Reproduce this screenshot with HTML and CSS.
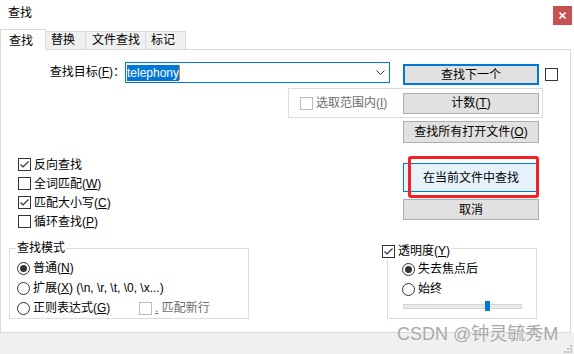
FILE: index.html
```html
<!DOCTYPE html>
<html lang="zh-CN">
<head>
  <meta charset="UTF-8">
  <title>查找</title>
  <link rel="stylesheet" href="styles.css">
</head>
<body>
  <div class="dialog">
    <div class="titlebar">
      <span class="title">查找</span>
      <span class="close">
        <svg width="7" height="7" viewBox="0 0 7 7"><path d="M0.5 0.5l6 6M6.5 0.5l-6 6"/></svg>
      </span>
    </div>

    <div class="tabs">
      <div class="tab active">查找</div>
      <div class="tab tab-short">替换</div>
      <div class="tab tab-long">文件查找</div>
      <div class="tab tab-short">标记</div>
    </div>

    <div class="panel">
      <div class="row-find">
        <label class="find-label">查找目标(<u>F</u>)：</label>
        <div class="combo">
          <span class="sel">telephony</span><span class="caret"></span>
          <svg class="chevron" width="9" height="5" viewBox="0 0 9 5"><path d="M0.5 0.5l4 4 4-4"/></svg>
        </div>
        <button class="btn btn-default">查找下一个</button>
        <span class="cb cb-side"></span>
      </div>

      <div class="range">
        <span class="cb off"></span>
        <span class="dim">选取范围内(<u>I</u>)</span>
        <button class="btn btn-count">计数(<u>T</u>)</button>
      </div>

      <button class="btn btn-all">查找所有打开文件(<u>O</u>)</button>

      <div class="row-main">
        <div class="checks">
          <div class="opt"><span class="cb"><svg viewBox="0 0 11 11"><path d="M1.5 5.5l2.5 2.5 5.5-5.5"/></svg></span><span>反向查找</span></div>
          <div class="opt"><span class="cb"></span><span>全词匹配(<u>W</u>)</span></div>
          <div class="opt"><span class="cb"><svg viewBox="0 0 11 11"><path d="M1.5 5.5l2.5 2.5 5.5-5.5"/></svg></span><span>匹配大小写(<u>C</u>)</span></div>
          <div class="opt"><span class="cb"></span><span>循环查找(<u>P</u>)</span></div>
        </div>
        <div class="actions">
          <button class="btn btn-hover">在当前文件中查找<span class="mark"></span></button>
          <button class="btn btn-cancel">取消</button>
        </div>
      </div>

      <div class="row-groups">
        <fieldset class="group mode">
          <legend>查找模式</legend>
          <div class="opts">
            <div class="opt"><span class="rb on"></span><span>普通(<u>N</u>)</span></div>
            <div class="opt"><span class="rb"></span><span>扩展(<u>X</u>) (\n, \r, \t, \0, \x...)</span></div>
            <div class="opt"><span class="rb"></span><span class="regex">正则表达式(<u>G</u>)</span><span class="cb off"></span><span class="dim"><u>.</u> 匹配新行</span></div>
          </div>
        </fieldset>

        <fieldset class="group alpha">
          <legend><span class="cb"><svg viewBox="0 0 11 11"><path d="M1.5 5.5l2.5 2.5 5.5-5.5"/></svg></span><span>透明度(<u>Y</u>)</span></legend>
          <div class="opts">
            <div class="opt"><span class="rb on"></span><span>失去焦点后</span></div>
            <div class="opt"><span class="rb"></span><span>始终</span></div>
            <div class="slider"><span class="thumb"></span></div>
          </div>
        </fieldset>
      </div>
    </div>

    <div class="footer">
      <svg class="grip" width="8" height="8" viewBox="0 0 8 8">
        <rect x="6" y="0" width="2" height="2"/>
        <rect x="3" y="3" width="2" height="2"/><rect x="6" y="3" width="2" height="2"/>
        <rect x="0" y="6" width="2" height="2"/><rect x="3" y="6" width="2" height="2"/><rect x="6" y="6" width="2" height="2"/>
      </svg>
    </div>

    <div class="watermark">CSDN @钟灵毓秀M</div>
  </div>
</body>
</html>
```

FILE: styles.css
```css
* {
  box-sizing: border-box;
}
body {
  margin: 0;
  background: #fff;
  font-family: "Liberation Sans", "Noto Sans CJK SC", sans-serif;
  font-size: 12px;
  line-height: 16px;
  color: #000;
}
u {
  text-underline-offset: 1px;
}
.dialog {
  position: relative;
  width: 574px;
  height: 354px;
}

/* title bar */
.titlebar {
  height: 29px;
  display: flex;
  align-items: flex-start;
}
.title {
  margin: 5px 0 0 8px;
}
.close {
  margin: 6px 2px 0 auto;
  width: 19px;
  height: 19px;
  background: #c75050;
  display: flex;
  align-items: center;
  justify-content: center;
}
.close svg {
  stroke: #fff;
  stroke-width: 1.6;
}

/* tabs */
.tabs {
  height: 20px;
  display: flex;
  align-items: flex-end;
  position: relative;
  z-index: 1;
}
.tab {
  height: 18px;
  line-height: 16px;
  padding-left: 6px;
  border: 1px solid #d9d9d9;
  border-bottom: 0;
  background: #f0f0f0;
  margin-left: -1px;
}
.tab.active {
  width: 46px;
  height: 21px;
  margin-left: 0;
  margin-bottom: -1px;
  padding: 3px 0 0 8px;
  background: #fff;
}
.tab-short {
  width: 41px;
  padding-left: 5px;
}
.tab-long {
  width: 61px;
  padding-left: 6px;
}

/* panel */
.panel {
  width: 571px;
  height: 284px;
  border: 1px solid #d9d9d9;
}
.btn {
  display: block;
  width: 136px;
  height: 21px;
  padding: 0;
  font: inherit;
  color: #000;
  background: #e1e1e1;
  border: 1px solid #adadad;
  text-align: center;
}
.cb {
  width: 13px;
  height: 13px;
  flex: none;
  border: 1px solid #333;
  background: #fff;
  margin-right: 3px;
}
.cb svg {
  display: block;
  width: 11px;
  height: 11px;
  fill: none;
  stroke: #333;
  stroke-width: 1.2;
}
.cb.off {
  border-color: #bcbcbc;
}
.rb {
  width: 13px;
  height: 13px;
  flex: none;
  border: 1px solid #333;
  border-radius: 50%;
  margin-right: 3px;
  display: flex;
  align-items: center;
  justify-content: center;
}
.rb.on::after {
  content: "";
  width: 7px;
  height: 7px;
  border-radius: 50%;
  background: #333;
}
.dim {
  color: #6d6d6d;
}
.opt {
  display: flex;
  align-items: center;
  height: 20px;
}

.row-find {
  display: flex;
  align-items: flex-start;
  margin-top: 12px;
  height: 23px;
}
.find-label {
  width: 124px;
  text-align: right;
  line-height: 20px;
}
.combo {
  width: 265px;
  height: 21px;
  border: 1px solid #0078d7;
  display: flex;
  align-items: center;
  padding-left: 1px;
}
.sel {
  background: #0078d7;
  color: #fff;
  line-height: 16px;
}
.caret {
  width: 1px;
  height: 15px;
  background: #e08030;
}
.chevron {
  margin-left: auto;
  margin-right: 4px;
  fill: none;
  stroke: #333;
}
.btn-default {
  margin: 2px 0 0 13px;
  border: 2px solid #0078d7;
}
.cb-side {
  margin: 6px 0 0 6px;
}

.range {
  display: flex;
  align-items: center;
  width: 255px;
  height: 30px;
  margin: 3px 0 0 287px;
  padding-left: 11px;
  border: 1px solid #dcdcdc;
}
.btn-count {
  margin: 0 3px 0 auto;
}
.btn-all {
  margin: 3px 0 0 402px;
  height: 22px;
}

.row-main {
  display: flex;
  margin-top: 12px;
}
.checks {
  width: 402px;
  padding-left: 17px;
}
.checks .opt {
  height: 19px;
}
.actions {
  padding-top: 8px;
}
.btn-hover {
  position: relative;
  height: 29px;
  background: #e5f1fb;
  border-color: #0078d7;
}
.mark {
  position: absolute;
  left: 4px;
  top: -8px;
  width: 131px;
  height: 42px;
  border: 3px solid #f52020;
  border-radius: 3px;
}
.btn-cancel {
  margin-top: 7px;
}

/* bottom groups */
.row-groups {
  display: flex;
  align-items: flex-start;
  margin-top: 9px;
}
.group {
  margin: 0;
  padding: 0;
  border: 1px solid #dcdcdc;
  min-width: 0;
}
.group legend {
  padding: 0 1px;
  line-height: 16px;
}
.mode {
  width: 240px;
  margin-left: 8px;
}
.mode legend {
  margin-left: 6px;
}
.mode .opts {
  padding: 2px 0 0 7px;
}
.regex {
  width: 106px;
}
.alpha {
  width: 150px;
  margin: -2px 0 0 138px;
}
.alpha legend {
  display: flex;
  align-items: center;
  margin-left: -6px;
  padding: 5px 1px 0 0;
}
.alpha .opts {
  padding-left: 14px;
}
.slider {
  position: relative;
  width: 119px;
  height: 5px;
  margin: 5px 0 9px 1px;
  background: #e7eaea;
  border: 1px solid #d6d6d6;
}
.thumb {
  position: absolute;
  left: 81px;
  top: -4px;
  width: 5px;
  height: 10px;
  background: #0078d7;
}

.footer {
  height: 21px;
  background: #f0f0f0;
  display: flex;
  justify-content: flex-end;
  align-items: flex-end;
  padding: 0 2px 1px 0;
}
.grip {
  fill: #c2c2c2;
}
.watermark {
  position: absolute;
  left: 397px;
  top: 324px;
  font-size: 18px;
  line-height: 20px;
  color: #a8a8a8;
  text-shadow: 0 0 1px #fff;
}
```
